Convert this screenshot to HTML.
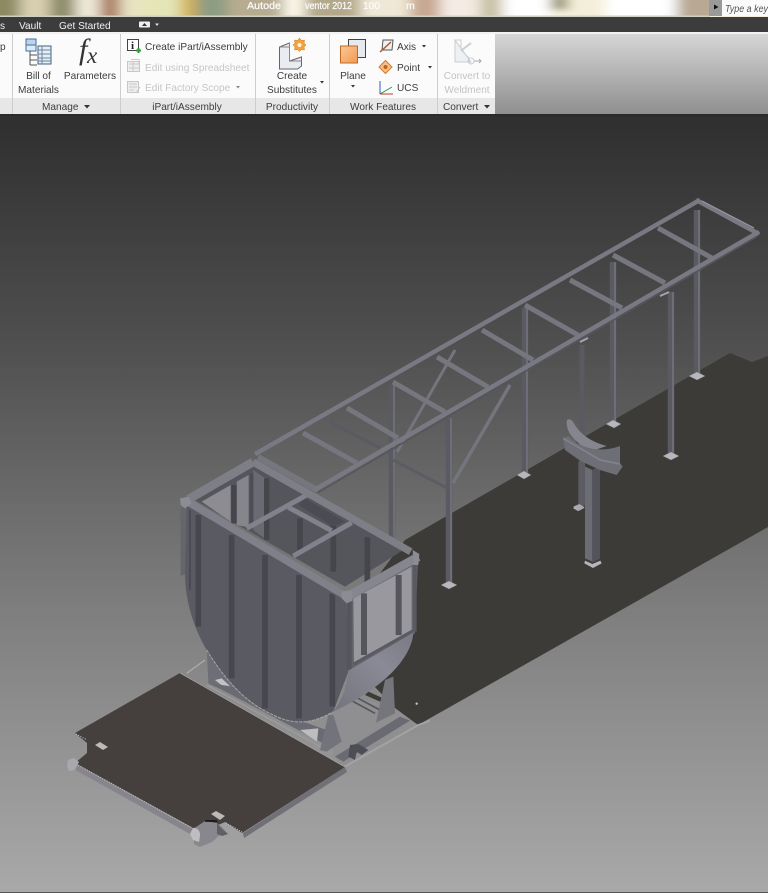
<!DOCTYPE html>
<html><head><meta charset="utf-8"><style>
html,body{margin:0;padding:0;background:#999}
svg{display:block}
text{font-family:"Liberation Sans",sans-serif;font-size:10.1px;fill:#3c3c3c}
.c{text-anchor:middle}
.g{fill:#c6c6c6}
.t{font-size:10.5px;fill:#fafafa;stroke:#fafafa;stroke-width:.25}
</style></head><body>
<svg width="768" height="893" viewBox="0 0 768 893" xmlns="http://www.w3.org/2000/svg">
<defs>
<linearGradient id="bg" x1="0" y1="0" x2="0" y2="1"><stop offset="0" stop-color="#2f2f2f"/><stop offset=".3" stop-color="#505050"/><stop offset=".62" stop-color="#7c7c7c"/><stop offset="1" stop-color="#a9a9a9"/></linearGradient>
<linearGradient id="rb" x1="0" y1="0" x2="0" y2="1"><stop offset="0" stop-color="#d6d6d6"/><stop offset="1" stop-color="#8f8f8f"/></linearGradient>
<linearGradient id="cy" x1="0" y1="1" x2="1" y2="0"><stop offset="0" stop-color="#74747d"/><stop offset=".6" stop-color="#8a8a96"/><stop offset="1" stop-color="#7a7a84"/></linearGradient>
<linearGradient id="or" x1="0" y1="0" x2="1" y2="1"><stop offset="0" stop-color="#fbc79a"/><stop offset="1" stop-color="#f09a50"/></linearGradient>
<filter id="b1" filterUnits="userSpaceOnUse" x="-30" y="-30" width="800" height="80"><feGaussianBlur stdDeviation="7 3"/></filter>
<filter id="b2"><feGaussianBlur stdDeviation=".35"/></filter>
<filter id="b3"><feGaussianBlur stdDeviation=".25"/></filter>
<clipPath id="tc"><rect width="710" height="16"/></clipPath>
</defs>

<!-- title strip -->
<rect width="768" height="17" fill="#f3efdc"/>
<g clip-path="url(#tc)"><g filter="url(#b1)">
<rect x="-20" y="-10" width="40" height="40" fill="#8d8a62"/>
<rect x="20" y="-10" width="30" height="40" fill="#d8d0b0"/>
<rect x="50" y="-10" width="25" height="40" fill="#8b8a68"/>
<rect x="75" y="-10" width="25" height="40" fill="#efe9d8"/>
<rect x="100" y="-10" width="20" height="40" fill="#a9795e"/>
<rect x="120" y="-10" width="20" height="40" fill="#e9e2c4"/>
<rect x="140" y="-10" width="40" height="40" fill="#e4e6b8"/>
<rect x="180" y="-10" width="17" height="40" fill="#d3b25a"/>
<rect x="197" y="-10" width="30" height="40" fill="#8c9c82"/>
<rect x="227" y="-10" width="56" height="40" fill="#b7ac90"/>
<rect x="283" y="-10" width="22" height="40" fill="#fbf8ea"/>
<rect x="305" y="-10" width="55" height="40" fill="#b3a88a"/>
<rect x="360" y="-10" width="50" height="40" fill="#f0e8d6"/>
<rect x="410" y="-10" width="30" height="40" fill="#c7a792"/>
<rect x="440" y="-10" width="40" height="40" fill="#f4ece4"/>
<rect x="480" y="-10" width="22" height="40" fill="#c8c0a2"/>
<rect x="502" y="-10" width="48" height="40" fill="#ffffff"/>
<rect x="550" y="-10" width="18" height="40" fill="#f4efda"/>
<rect x="552" y="-10" width="15" height="20" fill="#8a8660"/>
<rect x="568" y="-10" width="37" height="40" fill="#f4efda"/>
<rect x="605" y="-10" width="72" height="40" fill="#ffffff"/>
<rect x="677" y="-10" width="50" height="40" fill="#b8a894"/>
</g></g>
<rect x="0" y="15.500" width="710" height="1.500" fill="#cfcfc6"/>
<text x="247" y="9" class="t" textLength="34" lengthAdjust="spacingAndGlyphs">Autode</text>
<text x="305" y="9" class="t" textLength="47" lengthAdjust="spacingAndGlyphs">ventor 2012</text>
<text x="363" y="9" class="t" textLength="17" lengthAdjust="spacingAndGlyphs">100</text>
<text x="406" y="9" class="t">m</text>
<rect x="709" y="0" width="13" height="16" fill="#9a9a9a"/>
<path d="M714 4.500l4.500 2.500-4.500 2.500z" fill="#111"/>
<rect x="722" y="0" width="46" height="16" fill="#fbfbfb"/>
<text x="725" y="12" style="font-style:italic;font-size:10px;fill:#555" textLength="43" lengthAdjust="spacingAndGlyphs">Type a key</text>

<!-- tab bar -->
<rect y="17" width="768" height="16" fill="#3c3c3c"/>
<rect y="32" width="768" height="2" fill="#f2f2f2"/>
<text x="0" y="29" style="fill:#eee">s</text>
<text x="19" y="29" style="fill:#f2f2f2">Vault</text>
<text x="59" y="29" style="fill:#f2f2f2">Get Started</text>
<rect x="139" y="21.500" width="11" height="6" rx="1" fill="#eee"/><path d="M142 26l2.500-3 2.500 3z" fill="#333"/>
<path d="M155 23.500h4l-2 2.500z" fill="#ddd"/>

<!-- ribbon -->
<rect x="495" y="34" width="273" height="80" fill="url(#rb)"/>
<rect y="34" width="495" height="64" fill="#fbfbfb"/>
<rect y="98" width="495" height="16" fill="#e7e7e7"/>
<g fill="#cdcdcd"><rect x="12" y="34" width="1" height="80"/><rect x="120" y="34" width="1" height="80"/><rect x="255" y="34" width="1" height="80"/><rect x="329" y="34" width="1" height="80"/><rect x="437" y="34" width="1" height="80"/></g>
<rect y="114" width="768" height="2" fill="#2a2a2a"/>

<g filter="url(#b3)">
<text x="0" y="50">p</text>
<text class="c" x="38.500" y="79">Bill of</text>
<text class="c" x="38.500" y="93">Materials</text>
<text class="c" x="90" y="79">Parameters</text>
<text x="145" y="50">Create iPart/iAssembly</text>
<text x="145" y="71" class="g">Edit using Spreadsheet</text>
<text x="145" y="91" class="g">Edit Factory Scope</text>
<text class="c" x="292" y="79">Create</text>
<text class="c" x="292" y="93">Substitutes</text>
<text class="c" x="353" y="79">Plane</text>
<text x="397" y="50">Axis</text>
<text x="397" y="71">Point</text>
<text x="397" y="91">UCS</text>
<text class="c" x="467" y="79" style="fill:#c4c4c4">Convert to</text>
<text class="c" x="467" y="93" style="fill:#c4c4c4">Weldment</text>
<text x="42" y="110">Manage</text>
<text class="c" x="187" y="110">iPart/iAssembly</text>
<text class="c" x="292" y="110">Productivity</text>
<text class="c" x="383" y="110">Work Features</text>
<text x="443" y="110">Convert</text>
</g>
<g fill="#333">
<path d="M84 105h6l-3 3.500z"/><path d="M484 105h6l-3 3.500z"/>
<path d="M236 86h4l-2 2.500z" fill="#888"/>
<path d="M320 81h4l-2 2.500z"/><path d="M351 85h4l-2 2.500z"/>
<path d="M422 45h4l-2 2.500z"/><path d="M428 66h4l-2 2.500z"/>
</g>

<!-- BOM icon -->
<g fill="none" stroke-width="1">
<rect x="26" y="39" width="10" height="6" fill="#bcd3ea" stroke="#3f6f9f"/>
<rect x="26" y="45" width="10" height="6" fill="#dfeaf5" stroke="#3f6f9f"/>
<path d="M30 51v14M30 55h7M30 60h7M30 65h7" stroke="#555"/>
<rect x="38" y="46" width="13" height="18" fill="#e5edf5" stroke="#44617d"/>
<path d="M38 50h13M38 54h13M38 58h13M38 61h13M42 46v18" stroke="#6b859d"/>
</g>
<!-- fx -->
<text x="79" y="59" style="font-family:'Liberation Serif',serif;font-style:italic;font-size:30px;fill:#333">f</text>
<text x="87" y="63" style="font-family:'Liberation Serif',serif;font-style:italic;font-size:23px;fill:#333">x</text>
<!-- iPart icons -->
<rect x="127.500" y="39.500" width="11" height="11" fill="#fff" stroke="#444"/>
<text x="131" y="49" style="font-family:'Liberation Serif',serif;font-weight:bold;font-size:11px;fill:#222">i</text>
<path d="M136 50.500h5M138.500 48v5" stroke="#2a9a3a" stroke-width="2"/>
<g fill="#eee" stroke="#c8c8c8"><rect x="127.500" y="61.500" width="12" height="10"/><path d="M131 59.500h8v5M129 64h10M129 68h10M133 61v10" fill="none"/>
<rect x="127.500" y="81.500" width="11" height="11"/><path d="M129 84h8M129 87h8M129 90h5M136 93l4-6" fill="none"/></g>
<!-- Create substitutes -->
<path d="M279.500 47l10-4v18l12-4v9l-4 3h-18z" fill="#e9edf1" stroke="#666"/>
<path d="M279.500 47h10M289.500 43v18h12" fill="none" stroke="#888"/>
<path d="M299.500 38l2 2.500 3-.500-.500 3 2 2-2 2 .500 3-3-.500-2 2-2-2-3 .500.500-3-2-2 2-2-.500-3 3 .500z" fill="#f2a23e" stroke="#c77d1c" stroke-width=".5"/>
<circle cx="299.500" cy="45" r="2" fill="#fff2d8"/>
<!-- Plane -->
<rect x="348.500" y="39.500" width="17" height="18" fill="#e6e9ee" stroke="#444"/>
<rect x="340.500" y="46" width="17" height="17" fill="url(#or)" stroke="#c26a20"/>
<!-- Axis -->
<path d="M383 40h10l-1 10h-10z" fill="#eef1f5" stroke="#555"/>
<path d="M380 52l11-10" stroke="#b25a2a" stroke-width="1.500"/>
<!-- Point -->
<path d="M385.500 60.500l6.500 6.500-6.500 6.500-6.500-6.500z" fill="#f3c08e" stroke="#d57a2a"/>
<circle cx="385.500" cy="67" r="2" fill="#c45f1c"/>
<!-- UCS -->
<path d="M380 94l12-7" stroke="#2b9b4b"/>
<path d="M380 81v13" stroke="#2b5fc0"/><path d="M380 94h13" stroke="#c03b2b"/>
<!-- Convert -->
<g fill="none" stroke="#c9ced2"><path d="M455 40v22h16l-16-22z" fill="#eef1f3"/><path d="M455 40h6v10l8 8v4"/><path d="M462 50l9-7" stroke-width="2"/><circle cx="471" cy="61" r="3"/><path d="M474 61h7m-2-2l2 2-2 2" stroke="#a8adb0"/></g>

<!-- viewport -->
<rect y="116" width="768" height="777" fill="url(#bg)"/>
<rect y="892" width="768" height="1" fill="#555"/>

<g filter="url(#b2)">
<!-- main floor -->
<path d="M730 353L752 362 768 356V527L418 725 395 708 330 640 405 540z" fill="#3d3a39"/>

<!-- posts -->
<g stroke="#5a5a62" fill="none" stroke-width="6.500">
<path d="M392 385V540"/><path d="M449 418V583"/><path d="M525 308V473"/><path d="M582 345V506" stroke-width="5"/><path d="M613 262V423"/><path d="M671 292V454"/><path d="M697 210V375"/>
</g>
<g stroke="#6e6e77" fill="none" stroke-width="2">
<path d="M394 385V540"/><path d="M451 418V583"/><path d="M527 308V473"/><path d="M615 262V423"/><path d="M673 292V454"/><path d="M699 210V375"/>
</g>
<!-- bases -->
<g fill="#b8b8bc" stroke="#7c7c82" stroke-width=".5">
<path d="M441 585l8-4 8 4-8 4z"/><path d="M517 475l7-4 7 4-7 4z"/><path d="M573 508l5-3 6 3-6 3z"/><path d="M606 424l7-4 8 4-7 4z"/><path d="M663 456l8-4 8 4-8 4z"/><path d="M689 376l8-4 8 4-8 4z"/>
</g>
<!-- braces -->
<g stroke="#75757e" fill="none">
<path d="M455 350L397 452" stroke-width="3"/><path d="M510 385L453 483" stroke-width="3.500"/>
<path d="M393 460L447 488" stroke-width="3" stroke="#5c5c64"/><path d="M330 422L380 448" stroke-width="3" stroke="#5a5a61"/>
</g>
<!-- frame -->
<g stroke="#76767f" fill="none" stroke-width="5" stroke-linecap="butt">
<path d="M303 433L357 463M347 408L398 438M393 382L445 412M437 357L488 387M482 330L533 360M525 305L578 335M570 280L622 308M613 255L665 283M658 228L712 258"/>
<path d="M258 457L317 490" stroke-width="6"/>
</g>
<g stroke="#797983" fill="none" stroke-width="4.500" stroke-linecap="square">
<path d="M257 453L698 201"/><path d="M698 201L757 233"/><path d="M316 489L757 233"/>
</g>
<path d="M318 492.500L757 236.500" stroke="#55555c" stroke-width="1.500" fill="none"/>
<path d="M702 201L754 228" stroke="#9b9ba3" stroke-width="1" fill="none"/>
<path d="M580 342l8-4M660 296l9-4" stroke="#a5a5aa" stroke-width="2"/>

<!-- pedestal -->
<g transform="translate(500,190) scale(.33333)">
<path d="M235 815l20-5v135l-20 5z" fill="#5c5c64"/>
<path d="M255 830l22 10v275l-22-10z" fill="#6c6c74"/><path d="M277 840l23-14v280l-23 12z" fill="#53535b"/>
<path d="M255 1112l22 10 24-10 4 8-26 14-26-14z" fill="#b6b6ba"/>
<path d="M220 950l18-8 16 10-16 10z" fill="#a8a8ac"/>
<path d="M200 692C205 685 215 688 222 700 238 730 272 755 320 768L270 785C225 755 198 730 200 692z" fill="#85858e"/>
<path d="M190 745L205 738C240 775 300 790 360 768L360 820 368 830 350 855 300 840 240 812 195 780z" fill="#6e6e76"/>
<path d="M190 745L300 810 360 822" fill="none" stroke="#82828a" stroke-width="5"/>
</g>

<!-- base under box -->
<g transform="translate(170,450) scale(.33333)">
<path d="M50 670L105 630" stroke="#aaa" stroke-width="4"/>
<path d="M110 590L190 700 180 730 115 700z" fill="#6e6e76"/>
<path d="M135 690l20-5 30 28-8 10z" fill="#c2c2c6"/>
<path d="M120 700L460 880 470 840 300 780 190 710z" fill="#6a6a72"/>
<path d="M110 705L470 900" stroke="#9a9a9e" stroke-width="5"/>
<path d="M390 840l55-5-4 40z" fill="#bdbdc0"/>
</g>
<g transform="translate(300,660) scale(.33333)">
<path d="M90 170L160 105 285 150 355 195 130 322 100 290z" fill="#8f8f91"/>
<path d="M205 95L250 115 240 125 195 105z" fill="#3d3a39"/>
<path d="M165 110L240 150M155 122L225 160" stroke="#56565d" stroke-width="5" fill="none"/>
<path d="M255 60L280 50 285 160 228 188z" fill="#74747c"/>
<path d="M85 165L100 165 125 245 80 275 60 270z" fill="#73737b"/>
<path d="M105 290L300 170 330 182 130 305z" fill="#6a6a72"/>
<path d="M130 322L355 195 390 182" stroke="#a3a3a5" stroke-width="6" fill="none"/>
<path d="M150 255L175 252 205 270 185 285 170 275 165 300 145 290z" fill="#4d4d54"/>
<circle cx="350" cy="131" r="3.500" fill="#c8c8c8"/>
</g>

<!-- lower plate -->
<path d="M243 833L345 767 347 772 244 838z" fill="#707076"/>
<path d="M75 763L193 829 190 834 72 768z" fill="#85858b"/>
<path d="M180 673L345 767 242 833 225 822 218 825 193 828 75 763 87 753V743L75 733z" fill="#453f3c"/>
<path d="M76 764L192 828M76 734L87 740M226 823L242 832" stroke="#c0c0c0" stroke-width="1.200" stroke-dasharray="1 1.500" fill="none"/>
<path d="M180 673L345 767" stroke="#a0a0a0" stroke-width=".8" fill="none"/>
<path d="M95 745l5-3 8 5-5 3zM211 814l5-3 9 5-5 4z" fill="#bdb9b6"/>
<path d="M68 760l6-2 5 4-4 8-6 1-2-5z" fill="#a8a8ad"/>
<path d="M193 829l12-8 12 2 6 5 5 6-8 1-8 7-12 5-6-3z" fill="#87878d"/>
<path d="M193 828a6 7 0 0 1 7 8l-1 6-6-2-3-6z" fill="#bdbdc2"/>
<path d="M205 821h12" stroke="#111" stroke-width="1.500"/>
<path d="M217 823l5 6 6 5-6 2-5-2z" fill="#5f5f66"/>

<!-- box -->
<g transform="translate(170,450) scale(.33333)">
<path d="M32 175L52 165 52 370 32 378z" fill="#65656d"/>
<path d="M50 165L530 450 535 665 490 785C420 825 365 825 300 790 180 730 45 560 45 370z" fill="#5a5a63"/>
<path d="M110 600C165 690 230 760 300 790 365 825 420 825 490 785" fill="none" stroke="#a5a5a8" stroke-width="3" stroke-dasharray="10 3"/>
<g stroke="#46464d" stroke-width="17" fill="none">
<path d="M85 195V530"/><path d="M185 255V685"/><path d="M285 315V775"/><path d="M387 375V805"/><path d="M487 430V770"/>
</g>
<path d="M60 180V420" stroke="#4c4c55" stroke-width="6"/>
<path d="M530 445L745 310 735 550 535 665z" fill="#63636b"/>
<path d="M550 445L725 350 725 545 552 642z" fill="#98989e"/>
<g stroke="#55555c" fill="none">
<path d="M582 430V615" stroke-width="18"/><path d="M686 375V555" stroke-width="18"/><path d="M538 450V660" stroke-width="14"/>
</g>
<path d="M550 642L728 542" stroke="#5a5a62" stroke-width="8"/>
<path d="M535 662L730 548C725 625 640 715 490 785 515 750 532 710 535 662z" fill="url(#cy)"/>
<path d="M735 345V545" stroke="#58585f" stroke-width="10"/>

<!-- interior -->
<path d="M75 150L250 45 700 300 525 410z" fill="#55555c"/>
<path d="M95 155L182 105 182 215z" fill="#8c8c92"/>
<path d="M200 95L236 75 236 232 200 225z" fill="#85858c"/>
<path d="M250 60L285 85 285 265 250 240z" fill="#6b6b73"/>
<g stroke="#44444b" fill="none" stroke-width="16">
<path d="M192 105V220"/><path d="M290 85V270"/><path d="M390 205V300" stroke-width="17"/><path d="M490 205V365" stroke-width="17"/><path d="M592 262V400" stroke-width="17"/>
</g>
<path d="M245 70V225" stroke="#4d4d55" stroke-width="10"/>
<path d="M385 165L405 145 525 215 490 230z" fill="#4b4b52"/>
<!-- top rails -->
<g fill="none" stroke="#82828c" stroke-linecap="butt">
<path d="M230 235L410 135" stroke-width="15"/><path d="M355 172L485 242" stroke-width="15"/><path d="M370 318L545 218" stroke-width="15"/>
</g>
<path d="M55 148L249 36" stroke="#7e7e87" stroke-width="26" fill="none"/>
<path d="M249 36L722 305" stroke="#7e7e87" stroke-width="22" fill="none"/>
<path d="M528 442L745 320" stroke="#86868f" stroke-width="26" fill="none"/>
<path d="M50 153L528 440" stroke="#80808a" stroke-width="24" fill="none"/>
<path d="M52 170L525 452" stroke="#5a5a62" stroke-width="4" fill="none"/>
<path d="M30 145L55 140 65 160 45 175 32 165z" fill="#8c8c94"/>
<path d="M515 425L545 420 548 452 530 460 515 445z" fill="#8c8c94"/>
<path d="M728 300L748 312 745 345 730 345z" fill="#8c8c94"/>
</g>
</g>
</svg>
</body></html>
